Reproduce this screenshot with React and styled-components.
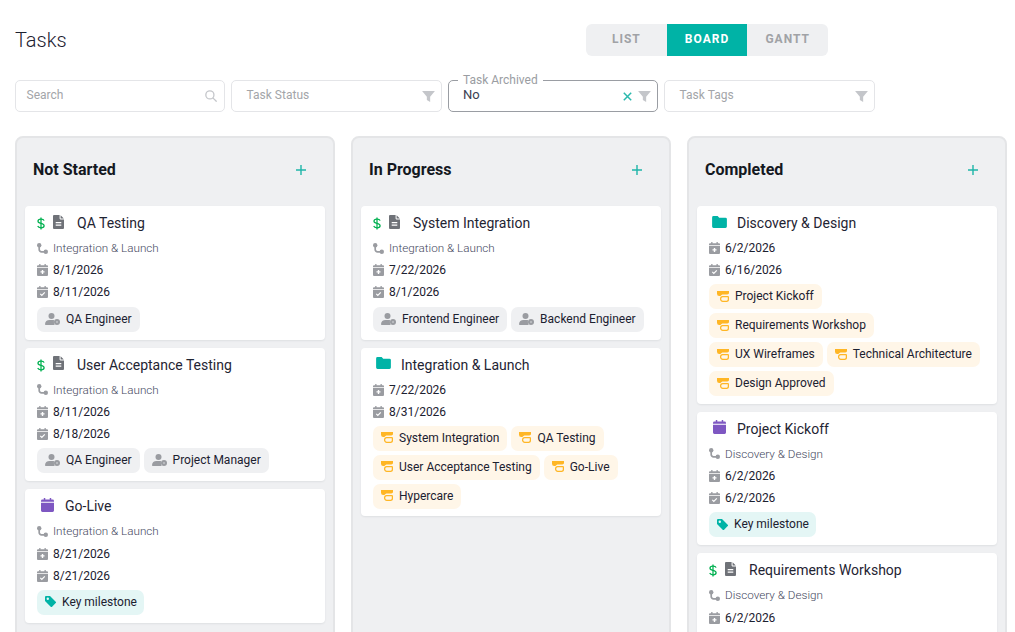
import React from "react";
import styled, { createGlobalStyle } from "styled-components";

const Global = createGlobalStyle`
  html, body { margin: 0; padding: 0; height: 100%; overflow: hidden; background: #fff; }
  body { font-family: Roboto, "Liberation Sans", sans-serif; color: #1c2130; }
  * { box-sizing: border-box; }
`;

const Page = styled.div`
  width: 1015px; height: 632px; overflow: hidden; padding: 24px 8px 0 15px;
`;
const TopBar = styled.header`display: flex; align-items: flex-start; height: 56px;`;
const Title = styled.h1`
  margin: 0; width: 571px; font-size: 20px; line-height: 32px; font-weight: 300; color: #1c2130;
`;
const Toggle = styled.div`
  display: flex; width: 242px; height: 32px; border-radius: 6px; overflow: hidden; background: #eff0f2;
`;
const ToggleItem = styled.div`
  flex: 1; display: flex; align-items: center; justify-content: center;
  font-size: 12px; font-weight: 700; letter-spacing: 1px; padding-bottom: 2px;
  background: ${p => (p.$active ? "#00b3a6" : "transparent")};
  color: ${p => (p.$active ? "#fff" : "#a0a2a6")};
`;
const Filters = styled.div`display: flex; gap: 6px; height: 32px;`;
const Filter = styled.div`
  position: relative; width: ${p => (p.$filled ? "210px" : "211px")}; height: 32px; border-radius: 5px;
  border: 1px solid ${p => (p.$filled ? "#9a9da3" : "#e4e5e8")};
  display: flex; align-items: center; padding: 0 6px 0 ${p => (p.$filled ? "14px" : "14.6px")};
  font-size: 12px; color: #1c2130;
`;
const SearchField = styled(Filter)`padding: 0 7px 0 10.6px; width: 210px;`;
const Placeholder = styled.span`color: #a3a5a9; flex: 1; padding-bottom: 3px;`;
const Value = styled.span`flex: 1; color: #3a3f52; font-size: 13px; padding-bottom: 3px;`;
const Legend = styled.span`
  position: absolute; left: 9px; top: -8px; padding: 0 5px; background: #fff;
  font-size: 12px; line-height: 14px; color: #9a9da2;
`;
const Board = styled.div`display: flex; gap: 16px; margin-top: 24px; align-items: stretch;`;
const Column = styled.section`
  width: 320px; height: 520px; flex: none; background: #eff0f2; border: 2px solid #e4e5e7;
  border-radius: 8px; padding: 0 8px;
`;
const ColumnHead = styled.div`
  height: 68px; padding: 0 19px 4px 8px; display: flex; align-items: center; justify-content: space-between;
`;
const ColumnName = styled.h2`margin: -2px 0 0; font-size: 16px; font-weight: 700; color: #14181f;`;
const Cards = styled.div`display: flex; flex-direction: column; gap: 8px;`;
const Card = styled.article`
  background: #fff; border-radius: 4px; padding: 6px 12px ${p => (p.$type === "phase" ? "7.6px" : "8px")};
  box-shadow: 0 1px 2px rgba(30, 35, 45, 0.08);
`;
const CardTitle = styled.div`display: flex; align-items: center; height: 22px; margin-bottom: 3px;`;
const IconSlot = styled.span`
  display: flex; align-items: center; gap: 8px; margin-right: ${p => p.$gap}px; padding-left: ${p => p.$pad}px;
  margin-top: -3px;
`;
const TitleText = styled.span`font-size: 14px; line-height: 22px; color: #1f2433;`;
const Row = styled.div`
  display: flex; align-items: center; height: 22px; gap: 5px; font-size: 12px; color: #1c2130;
`;
const ProjectRow = styled(Row)`height: 22.4px; padding-bottom: 0.4px; font-size: 11.7px; font-weight: 300; color: #454860;`;
const Chips = styled.div`
  display: flex; flex-wrap: wrap; gap: 4px; margin-top: ${p => (p.$afterProject ? "3.2px" : "3px")};
`;
const Chip = styled.span`
  display: inline-flex; align-items: center; height: 25px; border-radius: 7px;
  padding: 0 ${p => (p.$kind === "tag" ? "7px" : "8px")} 1px 8px;
  gap: 6px; font-size: 12px; color: #1c2130;
  background: ${p => ({ role: "#eff0f2", tag: "#e4f6f5", dep: "#fff6e8" })[p.$kind]};
`;

const DollarWrap = styled.span`display: flex; margin-top: 4px;`;
const Dollar = () => (
  <DollarWrap>
    <svg width="8" height="13" viewBox="0 0 9 14" fill="none" stroke="#00b050" strokeWidth="1.4">
      <path d="M8 3.8C7.6 2.600 6 2.200 4.500 2.200 2.600 2.200 1.100 3 1.100 4.500c0 3.200 6.900 1.700 6.900 5 0 1.500-1.600 2.300-3.500 2.300-1.700 0-3.200-.6-3.700-1.900" />
      <path d="M4.500 .2v13.600" />
    </svg>
  </DollarWrap>
);
const FileI = () => (
  <svg width="11" height="14" viewBox="0 0 11 14">
    <path fill="#6f7278" fillRule="evenodd" d="M1 0h5.600v3.600c0 .5.3.8.8.8H11V13a1 1 0 0 1-1 1H1a1 1 0 0 1-1-1V1a1 1 0 0 1 1-1Zm6.600.2L10.800 3.400H7.600ZM2.700 7v1.200h5.600V7Zm0 2.600v1.200h5.600V9.600Z" />
  </svg>
);
const Cal = () => (
  <svg width="13" height="14" viewBox="0 0 14 15">
    <path fill="#7e57c2" d="M3 0h1.600v1.600h4.800V0H11v1.600h1.500A1.500 1.500 0 0 1 14 3.100V4H0v-.9a1.500 1.500 0 0 1 1.500-1.500H3ZM0 5h14v8.500a1.500 1.500 0 0 1-1.500 1.500h-11A1.500 1.500 0 0 1 0 13.500Z" />
  </svg>
);
const Folder = () => (
  <svg width="15" height="12" viewBox="0 0 16 13">
    <path fill="#00b3a6" d="M1.500 0H6l1.700 1.800h6.800A1.500 1.500 0 0 1 16 3.300v8.200a1.500 1.500 0 0 1-1.500 1.500h-13A1.500 1.500 0 0 1 0 11.500v-10A1.500 1.500 0 0 1 1.500 0Z" />
  </svg>
);
const Route = () => (
  <svg width="11" height="11" viewBox="0 0 11 11" fill="none">
    <circle cx="2.200" cy="2.200" r="2.200" fill="#9a9ca1" />
    <circle cx="8.800" cy="8.800" r="2.200" fill="#9a9ca1" />
    <path d="M2.200 2v4.500A2.300 2.300 0 0 0 4.500 8.800H9" stroke="#9a9ca1" strokeWidth="1.700" />
  </svg>
);
const DateStart = () => (
  <svg width="11" height="12" viewBox="0 0 11 12">
    <path fill="#9a9ca1" fillRule="evenodd" d="M2.200 0h1.300v1.200h4V0h1.300v1.200H10a1 1 0 0 1 1 1V3.300H0V2.200a1 1 0 0 1 1-1h1.200ZM0 4h11v7a1 1 0 0 1-1 1H1a1 1 0 0 1-1-1Zm4.800 2v1.300H3.500v1.300h1.300V10h1.400V8.600h1.300V7.300H6.200V6Z" />
  </svg>
);
const DateEnd = () => (
  <svg width="11" height="12" viewBox="0 0 11 12">
    <path fill="#9a9ca1" d="M2.200 0h1.300v1.200h4V0h1.300v1.200H10a1 1 0 0 1 1 1V3.300H0V2.200a1 1 0 0 1 1-1h1.200ZM0 4h11v7a1 1 0 0 1-1 1H1a1 1 0 0 1-1-1Z" />
    <path fill="none" stroke="#fff" strokeWidth="1.200" d="M3.300 7.800l1.500 1.500 3-3" />
  </svg>
);
const RoleIcon = () => (
  <svg width="15" height="12" viewBox="0 0 15 12">
    <circle cx="6.500" cy="3" r="3" fill="#9a9ca1" />
    <path fill="#9a9ca1" d="M0 11.200C0 8.600 2 7 4.500 7h3c.6 0 1.100.1 1.600.3-.4 1.300-.2 3.300.6 4.700H.8a.8.8 0 0 1-.8-.8Z" />
    <circle cx="12" cy="9" r="3" fill="#9a9ca1" />
    <circle cx="12" cy="9" r=".7" fill="#eff0f2" />
  </svg>
);
const TagIcon = () => (
  <svg width="11" height="11" viewBox="0 0 11 11">
    <path fill="#00b3a6" fillRule="evenodd" d="M0 1a1 1 0 0 1 1-1h4l5.700 5.700a1 1 0 0 1 0 1.400l-3.600 3.600a1 1 0 0 1-1.400 0L0 5Zm2.800 .6a1.200 1.200 0 1 0 0 2.400 1.200 1.200 0 0 0 0-2.400Z" />
  </svg>
);
const DepIcon = () => (
  <svg width="12" height="11" viewBox="0 0 12 11" fill="none">
    <path fill="#ffb625" d="M0 0h12v1.800c0 1-.7 1.700-1.700 1.700H6.500C4.800 3.500 3.900 4.200 3.500 5H2.200A2.200 2.200 0 0 1 0 2.800Z" />
    <path stroke="#ffb625" strokeWidth="1.300" d="M5.500 5.600h5.300a.6.600 0 0 1 .6.600v2.400a1.700 1.700 0 0 1-1.700 1.700H5.800a2.200 2.200 0 0 1-2.200-2.300c0-1.400.8-2.400 1.900-2.400Z" />
  </svg>
);
const Plus = () => (
  <svg width="10" height="10" viewBox="0 0 10 10" stroke="#1fb5a9" strokeWidth="1.400"><path d="M5 0v10M0 5h10" /></svg>
);
const FilterIcon = () => (
  <svg width="13" height="11" viewBox="0 0 14 12"><path fill="#c4c6ca" d="M0 0h14L8.800 6.200V12L5.200 9.800V6.200Z" /></svg>
);
const SearchIcon = () => (
  <svg width="12" height="12" viewBox="0 0 13 13" fill="none" stroke="#c4c6ca" strokeWidth="1.400">
    <circle cx="5.300" cy="5.300" r="4.400" /><path d="M8.500 8.500L12.600 12.600" />
  </svg>
);
const Clear = () => (
  <svg width="9" height="9" viewBox="0 0 9 9" stroke="#2bb9ad" strokeWidth="1.500"><path d="M.8.800l7.400 7.400M8.200.800L.8 8.200" /></svg>
);
const FilterIcons = styled.span`display: flex; align-items: center; gap: 6px; margin-top: 1px;`;

const leading = {
  task: { node: <><Dollar /><FileI /></>, gap: 13, pad: 0 },
  milestone: { node: <Cal />, gap: 11, pad: 4 },
  phase: { node: <Folder />, gap: 10, pad: 3 },
};

const columns = [
  { name: "Not Started", cards: [
    { type: "task", title: "QA Testing", project: "Integration & Launch", start: "8/1/2026", end: "8/11/2026", role: ["QA Engineer"] },
    { type: "task", title: "User Acceptance Testing", project: "Integration & Launch", start: "8/11/2026", end: "8/18/2026", role: ["QA Engineer", "Project Manager"] },
    { type: "milestone", title: "Go-Live", project: "Integration & Launch", start: "8/21/2026", end: "8/21/2026", tag: ["Key milestone"] },
  ]},
  { name: "In Progress", cards: [
    { type: "task", title: "System Integration", project: "Integration & Launch", start: "7/22/2026", end: "8/1/2026", role: ["Frontend Engineer", "Backend Engineer"] },
    { type: "phase", title: "Integration & Launch", start: "7/22/2026", end: "8/31/2026", dep: ["System Integration", "QA Testing", "User Acceptance Testing", "Go-Live", "Hypercare"] },
  ]},
  { name: "Completed", cards: [
    { type: "phase", title: "Discovery & Design", start: "6/2/2026", end: "6/16/2026", dep: ["Project Kickoff", "Requirements Workshop", "UX Wireframes", "Technical Architecture", "Design Approved"] },
    { type: "milestone", title: "Project Kickoff", project: "Discovery & Design", start: "6/2/2026", end: "6/2/2026", tag: ["Key milestone"] },
    { type: "task", title: "Requirements Workshop", project: "Discovery & Design", start: "6/2/2026" },
  ]},
];

const TaskCard = ({ c }) => {
  const lead = leading[c.type];
  return (
    <Card $type={c.type}>
      <CardTitle>
        <IconSlot $gap={lead.gap} $pad={lead.pad}>{lead.node}</IconSlot>
        <TitleText>{c.title}</TitleText>
      </CardTitle>
      {c.project && <ProjectRow><Route />{c.project}</ProjectRow>}
      <Row><DateStart />{c.start}</Row>
      {c.end && <Row><DateEnd />{c.end}</Row>}
      {(c.role || c.tag || c.dep) && (
        <Chips $afterProject={!!c.project}>
          {c.role?.map(t => <Chip key={t} $kind="role"><RoleIcon />{t}</Chip>)}
          {c.tag?.map(t => <Chip key={t} $kind="tag"><TagIcon />{t}</Chip>)}
          {c.dep?.map(t => <Chip key={t} $kind="dep"><DepIcon />{t}</Chip>)}
        </Chips>
      )}
    </Card>
  );
};

export default function App() {
  return (
    <Page>
      <Global />
      <TopBar>
        <Title>Tasks</Title>
        <Toggle>
          <ToggleItem>LIST</ToggleItem>
          <ToggleItem $active>BOARD</ToggleItem>
          <ToggleItem>GANTT</ToggleItem>
        </Toggle>
      </TopBar>
      <Filters>
        <SearchField><Placeholder>Search</Placeholder><SearchIcon /></SearchField>
        <Filter><Placeholder>Task Status</Placeholder><FilterIcon /></Filter>
        <Filter $filled>
          <Legend>Task Archived</Legend>
          <Value>No</Value>
          <FilterIcons><Clear /><FilterIcon /></FilterIcons>
        </Filter>
        <Filter><Placeholder>Task Tags</Placeholder><FilterIcon /></Filter>
      </Filters>
      <Board>
        {columns.map(col => (
          <Column key={col.name}>
            <ColumnHead><ColumnName>{col.name}</ColumnName><Plus /></ColumnHead>
            <Cards>{col.cards.map(c => <TaskCard key={c.title} c={c} />)}</Cards>
          </Column>
        ))}
      </Board>
    </Page>
  );
}
